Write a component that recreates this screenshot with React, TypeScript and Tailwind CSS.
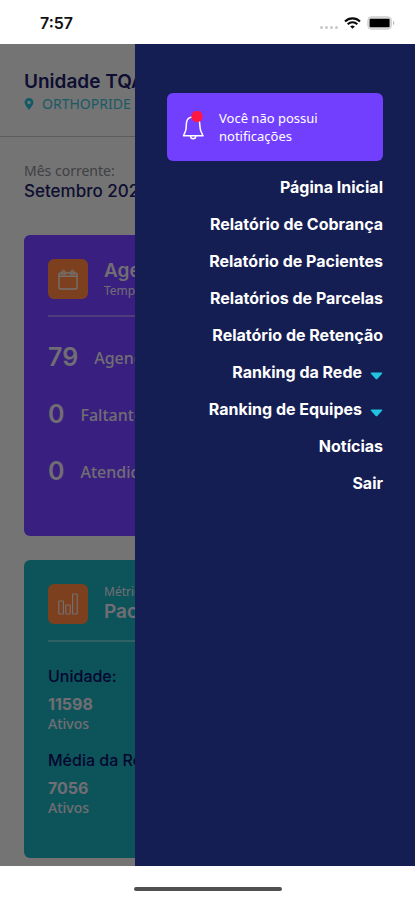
import type { ReactNode } from 'react';

const MENU = [
  { label: 'Página Inicial' },
  { label: 'Relatório de Cobrança' },
  { label: 'Relatório de Pacientes' },
  { label: 'Relatórios de Parcelas' },
  { label: 'Relatório de Retenção' },
  { label: 'Ranking da Rede', expandable: true },
  { label: 'Ranking de Equipes', expandable: true },
  { label: 'Notícias' },
  { label: 'Sair' },
];

const AGENDA = [
  { value: 79, label: 'Agendados' },
  { value: 0, label: 'Faltantes' },
  { value: 0, label: 'Atendidos' },
];

const PATIENTS = [
  { title: 'Unidade:', value: '11598' },
  { title: 'Média da Rede:', value: '7056' },
];

export default function App() {
  return (
    <div className="flex min-h-screen flex-col bg-white font-['Inter',sans-serif]">
      <StatusBar />
      <div className="relative flex-1 overflow-hidden bg-[#e8e8e8]">
        <Dashboard />
        <div className="absolute inset-0 bg-black/50" />
        <Drawer />
      </div>
      <footer className="flex h-[34px] items-center justify-center pt-3">
        <div className="h-1 w-[148px] rounded-full bg-[#505050]" />
      </footer>
    </div>
  );
}

function StatusBar() {
  return (
    <header className="flex h-11 items-center justify-between pt-0.5 pr-5 pl-10">
      <span className="text-base leading-5 font-semibold text-[#111]">7:57</span>
      <div className="flex items-center gap-1.5">
        <div className="flex gap-0.5 pt-2">
          {[0, 1, 2, 3].map((i) => (
            <span key={i} className="size-[3px] rounded-full bg-[#c8c8c8]" />
          ))}
        </div>
        <svg viewBox="0 0 17 12" className="h-3 w-[17px]" fill="none" stroke="#0a0a0a" strokeWidth="2.1">
          <path d="M1 4.4a10.7 10.7 0 0 1 15 0" />
          <path d="M3.7 7.3a6.8 6.8 0 0 1 9.6 0" />
          <path d="M8.5 11.8 6.2 9.5a3.3 3.3 0 0 1 4.6 0z" fill="#0a0a0a" stroke="none" />
        </svg>
        <svg viewBox="0 0 28 14" className="h-3.5 w-7" fill="none">
          <rect x="0.8" y="0.8" width="23.6" height="12.4" rx="3.6" fill="#ddd" stroke="#ccc" />
          <rect x="2.6" y="2.8" width="20" height="8.4" rx="1" fill="#000" />
          <path d="M26 4.8v4.4c1.9-.9 1.9-3.5 0-4.4z" fill="#bbb" />
        </svg>
      </div>
    </header>
  );
}

function Dashboard() {
  return (
    <main className="pb-2">
      <section className="h-[93px] border-b border-[#b8b8b8] px-6 pt-[26px]">
        <h1 className="truncate text-[19px] leading-6 font-semibold text-[#1c1c64]">Unidade TQA</h1>
        <p className="flex items-center gap-2 font-['Noto_Sans',sans-serif] text-sm leading-5 text-[#38b4cc]">
          <svg viewBox="0 0 10 13" className="h-3 w-[10px]" fill="#20b4d0">
            <path fillRule="evenodd" d="M5 0A4.8 4.8 0 0 0 .2 4.8C.2 7.6 3 9.6 5 13c2-3.4 4.8-5.4 4.8-8.2A4.8 4.8 0 0 0 5 0zm0 3a1.9 1.9 0 1 1 0 3.8A1.9 1.9 0 0 1 5 3z" />
          </svg>
          ORTHOPRIDE
        </p>
      </section>

      <section className="px-6 pt-6">
        <p className="font-['Noto_Sans',sans-serif] text-sm leading-5 text-[#808088]">Mês corrente:</p>
        <p className="text-[17px] leading-5 font-medium text-[#1c1c64]">Setembro 2021</p>
      </section>

      <div className="flex flex-col gap-6 px-6 pt-[34px]">
        <Card
          className="h-[301px] bg-[#733fff]"
          icon={<CalendarIcon />}
          heading={
            <>
              <h2 className="text-[19px] leading-6 font-semibold">Agenda</h2>
              <p className="font-['Noto_Sans',sans-serif] text-xs leading-4">Tempo real</p>
            </>
          }
        >
          <ul className="pt-3">
            {AGENDA.map((row) => (
              <li key={row.label} className="flex h-[57px] items-center gap-4">
                <span className="text-[25px] font-semibold">{row.value}</span>
                <span className="font-['Noto_Sans',sans-serif] text-base font-medium">{row.label}</span>
              </li>
            ))}
          </ul>
        </Card>

        <Card
          className="h-[298px] bg-[#18a8b2]"
          icon={<ChartIcon />}
          heading={
            <>
              <p className="font-['Noto_Sans',sans-serif] text-xs leading-4">Métricas</p>
              <h2 className="text-[19px] leading-6 font-semibold">Pacientes</h2>
            </>
          }
        >
          <dl className="flex flex-col gap-4 pt-[22px]">
            {PATIENTS.map((p) => (
              <div key={p.title}>
                <dt className="text-base leading-6 font-medium text-[#0a0a60]">{p.title}</dt>
                <dd className="pt-1">
                  <p className="text-base leading-6 font-bold">{p.value}</p>
                  <p className="font-['Noto_Sans',sans-serif] text-sm leading-4 font-medium">Ativos</p>
                </dd>
              </div>
            ))}
          </dl>
        </Card>
      </div>
    </main>
  );
}

type CardProps = { className: string; icon: ReactNode; heading: ReactNode; children: ReactNode };

function Card({ className, icon, heading, children }: CardProps) {
  return (
    <section className={`rounded-md px-6 pt-6 text-[#e0dce8] ${className}`}>
      <div className="flex items-center gap-4 border-b-2 border-white/30 pb-4">
        <div className="flex size-10 items-center justify-center rounded-md bg-[#f8803c]">{icon}</div>
        <div>{heading}</div>
      </div>
      {children}
    </section>
  );
}

function CalendarIcon() {
  return (
    <svg viewBox="0 0 20 21" className="h-[21px] w-5" fill="none" stroke="#e8e0e0" strokeWidth="1.4">
      <path d="M1 7.2h18v11.3a1.5 1.5 0 0 1-1.500 1.500h-15A1.500 1.500 0 0 1 1 18.500z" />
      <path d="M1 7.200V5.500C1 4.500 1.700 4 3 4h14c1.300 0 2 .5 2 1.500v1.700" />
      <path d="M3.800 6V2.800c0-2 3.400-2 3.400 0V6M12.800 6V2.800c0-2 3.400-2 3.400 0V6" fill="#e8c0a8" strokeWidth="1" />
    </svg>
  );
}

function ChartIcon() {
  return (
    <svg viewBox="0 0 20 22" className="h-[22px] w-5" fill="none" stroke="#e8dcdc" strokeWidth="1.2">
      <rect x="0.8" y="8" width="4.6" height="13" rx="0.4" />
      <rect x="7.8" y="12" width="4.400" height="9" rx="0.4" />
      <rect x="14.600" y="1" width="4.600" height="20" rx="0.4" />
    </svg>
  );
}

function Drawer() {
  return (
    <aside className="absolute inset-y-0 right-0 w-[280px] bg-[#151e52] px-8 pt-[49px] text-white">
      <div className="flex h-[68px] items-center gap-3.5 rounded-md bg-[#733fff] pl-3.5">
        <svg viewBox="0 0 24 32" className="h-8 w-6" fill="none" stroke="#fff" strokeWidth="1.5">
          <path d="M4.500 20c1-3 .6-5 1-8.500C6 8 8 6 12 6s6.200 2 6.600 5.500c.4 3.500.2 5.500 1.200 8.500l2.200 4.700H2.500z" strokeLinejoin="round" />
          <path d="M9.500 25c.3 3.800 5 3.800 5.300 0" />
          <circle cx="16" cy="5.500" r="5.700" fill="#ff1744" stroke="none" />
        </svg>
        <p className="font-['Noto_Sans',sans-serif] text-[13px] leading-[18px]">
          Você não possui
          <br />
          notificações
        </p>
      </div>
      <nav className="flex flex-col items-end pt-2">
        {MENU.map((item) =>
          item.expandable ? (
            <button key={item.label} type="button" className="flex h-[37px] items-start gap-2 pt-1.5 text-base font-bold">
              {item.label}
              <svg viewBox="0 0 13 8" className="mt-3 h-2 w-[13px]" fill="#20c4e0">
                <path d="M1.500.5h10c.8 0 1.100.8.500 1.300L7.300 6.900a1.200 1.200 0 0 1-1.600 0L1 1.800C.4 1.300.7.500 1.500.500z" />
              </svg>
            </button>
          ) : (
            <a key={item.label} href="#" className="flex h-[37px] items-start pt-1.5 text-base font-bold">
              {item.label}
            </a>
          ),
        )}
      </nav>
    </aside>
  );
}
